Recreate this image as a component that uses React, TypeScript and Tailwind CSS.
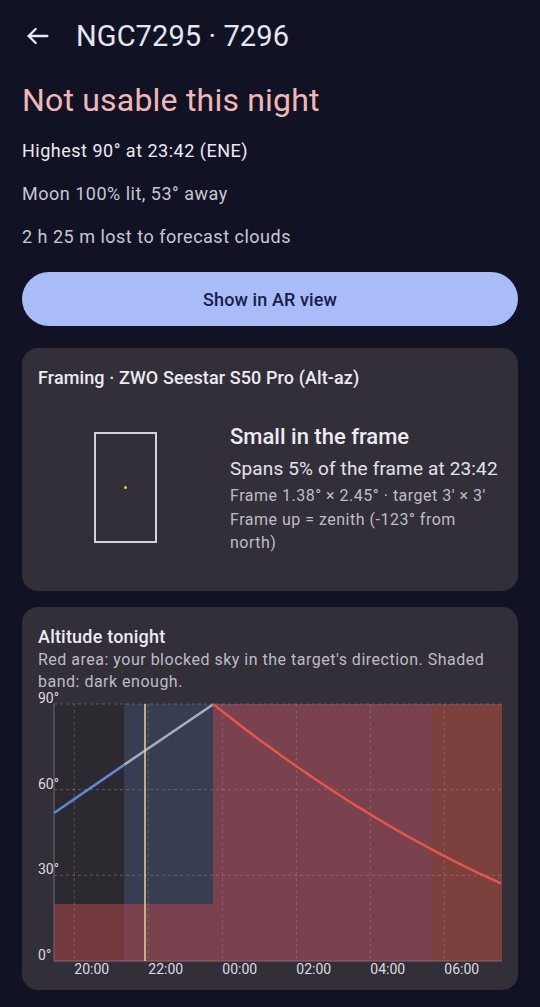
import React from "react";

const font = { fontFamily: "Roboto, 'Noto Sans', sans-serif" };

// altitude chart in page coordinates (plot 54..502 x, 704..961 y)
const X0 = 54;
const X1 = 502;
const Y90 = 704;
const Y0 = 961;
const TOP = 686;
const hourX = (h: number) => 74.3 + (h - 20) * 37;
const altY = (a: number) => Y0 - (a / 90) * (Y0 - Y90);

const redCurve = (() => {
  const pts: string[] = [];
  for (let x = 213; x <= 502; x += 6) {
    const t = (x - 213) / (502 - 213);
    const a = 90 - 63 * (1.28 * t - 0.28 * t * t);
    pts.push(`${x.toFixed(1)},${altY(a).toFixed(1)}`);
  }
  return pts.join(" ");
})();

const AltitudeChart: React.FC = () => {
  const hours = [20, 22, 24, 26, 28, 30];
  const labels = ["20:00", "22:00", "00:00", "02:00", "04:00", "06:00"];
  return (
    <svg width={464} height={300} className="-mt-[7px] block" style={font}>
      <g transform={`translate(-38,-${TOP})`}>
        {/* darker plot background */}
        <rect x={X0} y={Y90} width={124 - X0} height={Y0 - Y90} fill="#2c2a30" />
        {/* dark enough band */}
        <rect x={124} y={Y90} width={432 - 124} height={Y0 - Y90} fill="#393d52" />
        {/* twilight end */}
        <rect x={432} y={Y90} width={X1 - 432} height={Y0 - Y90} fill="#3d3c2e" />
        {/* blocked sky */}
        <rect x={X0} y={904} width={213 - X0} height={Y0 - 904} fill="#b0454a" fillOpacity={0.55} />
        <rect x={213} y={Y90} width={X1 - 213} height={Y0 - Y90} fill="#b0454a" fillOpacity={0.55} />
        {/* grid */}
        {[60, 30, 90].map((a) => (
          <line key={a} x1={X0} x2={X1} y1={altY(a)} y2={altY(a)} stroke="#9a94a0" strokeOpacity={0.45} strokeDasharray="3 3" strokeWidth={1} />
        ))}
        {hours.map((h) => (
          <line key={h} x1={hourX(h)} x2={hourX(h)} y1={Y90} y2={Y0} stroke="#9a94a0" strokeOpacity={0.4} strokeDasharray="3 3" strokeWidth={1} />
        ))}
        <line x1={X0} x2={X0} y1={Y90} y2={Y0} stroke="#6e6874" strokeWidth={1} />
        <line x1={X0} x2={X1} y1={Y0} y2={Y0} stroke="#8c6a70" strokeWidth={1} />
        {/* altitude curve */}
        <line x1={54} y1={813} x2={124.5} y2={764.6} stroke="#5f86d8" strokeWidth={2.5} />
        <line x1={124.5} y1={764.6} x2={213} y2={704.5} stroke="#a7acbf" strokeWidth={2.5} />
        <polyline points={redCurve} fill="none" stroke="#e4554c" strokeWidth={2.5} />
        {/* now marker */}
        <line x1={145} x2={145} y1={Y90} y2={Y0} stroke="#e9d58e" strokeWidth={1.5} />
        {/* y labels */}
        {[90, 60, 30, 0].map((a) => (
          <text key={a} x={38} y={altY(a) - 1} fontSize={14} fill="#dcdae2">
            {a}°
          </text>
        ))}
        {hours.map((h, i) => (
          <text key={h} x={hourX(h)} y={974} fontSize={14} fill="#dcdae2">
            {labels[i]}
          </text>
        ))}
      </g>
    </svg>
  );
};

const App: React.FC = () => {
  return (
    <div className="min-h-[1007px] w-[540px] bg-[#111325] text-[#e4e2ec]" style={font}>
      <header className="flex h-[72px] items-center px-[24px]">
        <svg width="28" height="28" viewBox="0 0 24 24" fill="none" stroke="#e8e8f0" strokeWidth={2} strokeLinecap="round" strokeLinejoin="round">
          <path d="M20 12H4" />
          <path d="M10 6l-6 6 6 6" />
        </svg>
        <h1 className="ml-[24px] text-[29px] leading-none tracking-[0.1px] text-[#e6e6f0]">NGC7295 · 7296</h1>
      </header>

      <main className="px-[22px]">
        <h2 className="mt-[9px] text-[32px] leading-[38px] tracking-[0.2px] text-[#f1b7b7]">Not usable this night</h2>
        <p className="mt-[19px] text-[18px] leading-[25px] tracking-[0.5px] text-[#eceaf2]">Highest 90° at 23:42 (ENE)</p>
        <p className="mt-[18px] text-[18px] leading-[25px] tracking-[0.5px] text-[#c8c6d4]">Moon 100% lit, 53° away</p>
        <p className="mt-[18px] text-[18px] leading-[25px] tracking-[0.5px] text-[#c8c6d4]">2 h 25 m lost to forecast clouds</p>

        <button className="mt-[23px] flex h-[54px] w-full items-center justify-center rounded-full bg-[#a9bcf8] text-[18px] font-medium tracking-[0.1px] text-[#17204a]">
          Show in AR view
        </button>

        <section className="mt-[22px] h-[243px] rounded-[16px] bg-[#322f38] px-[16px] pt-[18px]">
          <h3 className="text-[18px] font-medium leading-[24px] tracking-[0.1px] text-[#eceaf2]">Framing · ZWO Seestar S50 Pro (Alt-az)</h3>
          <div className="mt-[42px] flex">
            <div className="ml-[56px] flex h-[111px] w-[63px] shrink-0 items-center justify-center border-2 border-[#d4d2dc]">
              <div className="h-[3px] w-[3px] rounded-full bg-[#e6c46a]" />
            </div>
            <div className="ml-[73px] flex-1">
              <div className="-mt-[9px] text-[22px] font-medium leading-[28px] text-[#eceaf2]">Small in the frame</div>
              <div className="mt-[5px] text-[19px] leading-[26px] tracking-[0.15px] text-[#e4e2ec]">Spans 5% of the frame at 23:42</div>
              <div className="mt-[2px] text-[16px] leading-[23.5px] tracking-[0.5px] text-[#bebcc8]">
                <div>Frame 1.38° × 2.45° · target 3' × 3'</div>
                <div>Frame up = zenith (-123° from north)</div>
              </div>
            </div>
          </div>
        </section>

        <section className="mt-[16px] h-[383px] overflow-hidden rounded-[16px] bg-[#322f38] px-[16px] pt-[18px]">
          <h3 className="text-[18px] font-medium leading-[24px] tracking-[0.2px] text-[#eceaf2]">Altitude tonight</h3>
          <p className="text-[16px] leading-[22px] tracking-[0.5px] text-[#bebcc8]">
            Red area: your blocked sky in the target's direction. Shaded band: dark enough.
          </p>
          <AltitudeChart />
        </section>
      </main>
    </div>
  );
};

export default App;
